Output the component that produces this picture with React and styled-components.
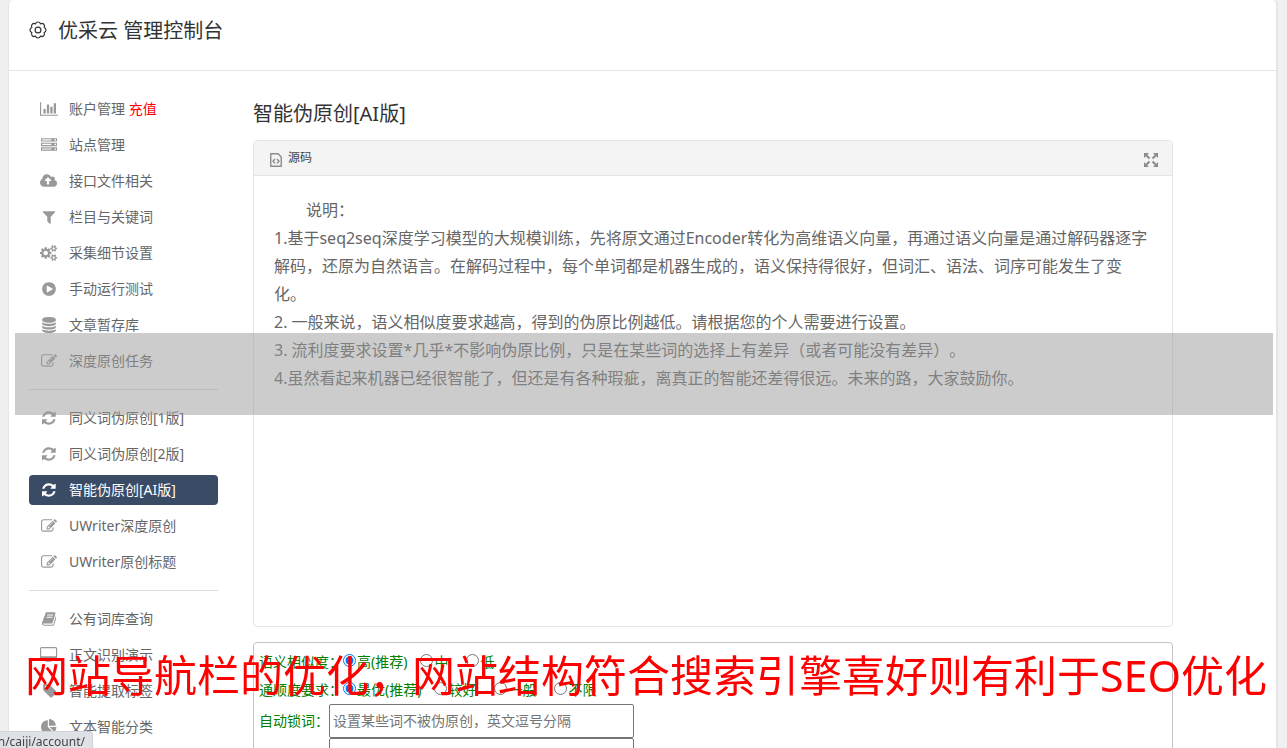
import React from "react";
import styled, { createGlobalStyle } from "styled-components";

const GlobalStyle = createGlobalStyle`
  *, *::before, *::after { box-sizing: border-box; }
  html, body { margin: 0; padding: 0; }
  body {
    background: #f0f0f0;
    color: #666;
    font-family: "Noto Sans", "Noto Sans CJK SC", sans-serif;
    font-size: 14px;
    line-height: 20px;
    text-spacing-trim: space-all;
  }
`;

const ICONS = {
  chart: ["0 0 2048 1792", "M640 896v512h-256v-512h256zm384-512v1024h-256v-1024h256zm1024 1152v128h-2048v-1536h128v1408h1920zm-640-896v768h-256v-768h256zm384-384v1152h-256v-1152h256z"],
  server: ["0 0 1792 1792", "M128 1408h1024v-128h-1024v128zm0-512h1024v-128h-1024v128zm1568 448q0-40-28-68t-68-28-68 28-28 68 28 68 68 28 68-28 28-68zm-1568-960h1024v-128h-1024v128zm1568 448q0-40-28-68t-68-28-68 28-28 68 28 68 68 28 68-28 28-68zm0-512q0-40-28-68t-68-28-68 28-28 68 28 68 68 28 68-28 28-68zm96 832v384h-1792v-384h1792zm0-512v384h-1792v-384h1792zm0-512v384h-1792v-384h1792z"],
  cloud: ["0 0 1920 1792", "M1280 864q0-14-9-23l-352-352q-9-9-23-9t-23 9l-351 351q-10 12-10 24 0 14 9 23t23 9h224v352q0 13 9.5 22.5t22.5 9.5h192q13 0 22.5-9.5t9.5-22.5v-352h224q13 0 22.5-9.5t9.5-22.5zm640 288q0 159-112.5 271.5t-271.5 112.5h-1088q-185 0-316.5-131.5t-131.5-316.5q0-130 70-240t188-165q-2-30-2-43 0-212 150-362t362-150q156 0 285.5 87t188.5 231q71-62 166-62 106 0 181 75t75 181q0 76-41 138 130 31 213.5 135.5t83.5 238.5z"],
  filter: ["0 0 1792 1792", "M1595 295q17 41-14 70l-493 493v742q0 42-39 59-13 5-25 5-27 0-45-19l-256-256q-19-19-19-45v-486l-493-493q-31-29-14-70 17-39 59-39h1280q42 0 59 39z"],
  cogs: ["0 0 1920 1792", "M896 896q0-106-75-181t-181-75-181 75-75 181 75 181 181 75 181-75 75-181zm768 512q0-52-38-90t-90-38-90 38-38 90q0 53 37.5 90.5t90.5 37.5 90.5-37.5 37.5-90.5zm0-1024q0-52-38-90t-90-38-90 38-38 90q0 53 37.5 90.5t90.5 37.5 90.5-37.5 37.5-90.5zm-384 421v185q0 10-7 19.5t-16 10.5l-155 24q-11 35-32 76 34 48 90 115 7 11 7 20 0 12-7 19-23 30-82.5 89.5t-78.5 59.5q-11 0-21-7l-115-90q-37 19-77 31-11 108-23 155-7 24-30 24h-186q-11 0-20-7.5t-10-17.5l-23-153q-34-10-75-31l-118 89q-7 7-20 7-11 0-21-8-144-133-144-160 0-9 7-19 10-14 41-53t47-61q-23-44-35-82l-152-24q-10-1-17-9.5t-7-19.5v-185q0-10 7-19.5t16-10.5l155-24q11-35 32-76-34-48-90-115-7-11-7-20 0-12 7-20 22-30 82-89t79-59q11 0 21 7l115 90q34-18 77-32 11-108 23-154 7-24 30-24h186q11 0 20 7.5t10 17.5l23 153q34 10 75 31l118-89q8-7 20-7 11 0 21 8 144 133 144 160 0 8-7 19-12 16-42 54t-45 60q23 48 34 82l152 23q10 2 17 10.5t7 19.5zm640 533v140q0 16-149 31-12 27-30 52 51 113 51 138 0 4-4 7-122 71-124 71-8 0-46-47t-52-68q-20 2-30 2t-30-2q-14 21-52 68t-46 47q-2 0-124-71-4-3-4-7 0-25 51-138-18-25-30-52-149-15-149-31v-140q0-16 149-31 13-29 30-52-51-113-51-138 0-4 4-7 4-2 35-20t59-34 30-16q8 0 46 46.5t52 67.5q20-2 30-2t30 2q51-71 92-112l6-2q4 0 124 70 4 3 4 7 0 25-51 138 17 23 30 52 149 15 149 31zm0-1024v140q0 16-149 31-12 27-30 52 51 113 51 138 0 4-4 7-122 71-124 71-8 0-46-47t-52-68q-20 2-30 2t-30-2q-14 21-52 68t-46 47q-2 0-124-71-4-3-4-7 0-25 51-138-18-25-30-52-149-15-149-31v-140q0-16 149-31 13-29 30-52-51-113-51-138 0-4 4-7 4-2 35-20t59-34 30-16q8 0 46 46.5t52 67.5q20-2 30-2t30 2q51-71 92-112l6-2q4 0 124 70 4 3 4 7 0 25-51 138 17 23 30 52 149 15 149 31z"],
  play: ["0 0 1792 1792", "M896 128q209 0 385.5 103t279.5 279.5 103 385.5-103 385.5-279.5 279.5-385.5 103-385.5-103-279.5-279.5-103-385.5 103-385.5 279.5-279.5 385.5-103zm384 823q32-18 32-55t-32-55l-544-320q-31-19-64-1-32 19-32 56v640q0 37 32 56 16 8 32 8 17 0 32-9z"],
  database: ["0 0 1792 1792", "M896 768q237 0 443-43t325-127v170q0 69-103 128t-280 93.5-385 34.5-385-34.5-280-93.5-103-128v-170q119 84 325 127t443 43zm0 768q237 0 443-43t325-127v170q0 69-103 128t-280 93.5-385 34.5-385-34.5-280-93.5-103-128v-170q119 84 325 127t443 43zm0-384q237 0 443-43t325-127v170q0 69-103 128t-280 93.5-385 34.5-385-34.5-280-93.5-103-128v-170q119 84 325 127t443 43zm0-1152q208 0 385 34.5t280 93.5 103 128v128q0 69-103 128t-280 93.5-385 34.5-385-34.5-280-93.5-103-128v-128q0-69 103-128t280-93.5 385-34.5z"],
  edit: ["0 0 1792 1792", "M888 1184l116-116-152-152-116 116v56h96v96h56zm440-720q-16-16-33 1l-350 350q-17 17-1 33t33-1l350-350q17-17 1-33zm80 594v190q0 119-84.5 203.5t-203.5 84.5h-832q-119 0-203.5-84.5t-84.5-203.5v-832q0-119 84.5-203.5t203.5-84.5h832q63 0 117 25 15 7 18 23 3 17-9 29l-49 49q-14 14-32 8-23-6-45-6h-832q-66 0-113 47t-47 113v832q0 66 47 113t113 47h832q66 0 113-47t47-113v-126q0-13 9-22l64-64q15-15 35-7t20 29zm-96-738l288 288-672 672h-288v-288zm444 132l-92 92-288-288 92-92q28-28 68-28t68 28l152 152q28 28 28 68t-28 68z"],
  refresh: ["0 0 1536 1792", "M1511 1056q0 5-1 7-64 268-268 434.5t-478 166.5q-146 0-282.5-55t-243.5-157l-129 129q-19 19-45 19t-45-19-19-45v-448q0-26 19-45t45-19h448q26 0 45 19t19 45-19 45l-137 137q71 66 161 102t187 36q134 0 250-65t186-179q11-17 53-117 8-23 30-23h192q13 0 22.5 9.5t9.5 22.5zm25-800v448q0 26-19 45t-45 19h-448q-26 0-45-19t-19-45 19-45l138-138q-148-137-349-137-134 0-250 65t-186 179q-11 17-53 117-8 23-30 23h-199q-13 0-22.5-9.5t-9.5-22.5v-7q65-268 270-434.5t480-166.5q146 0 284 55.5t245 156.5l130-129q19-19 45-19t45 19 19 45z"],
  book: ["0 0 1664 1792", "M1639 478q40 57 18 129l-275 906q-19 64-76.5 107.5t-122.5 43.5h-923q-77 0-148.5-53.5t-99.5-131.5q-24-67-2-127 0-4 3-27t4-37q1-8-3-21.5t-3-19.5q2-11 8-21t16.5-23.5 16.5-23.5q23-38 45-91.5t30-91.5q3-10 .5-30t-.5-28q3-11 17-28t17-23q21-36 42-92t25-90q1-9-2.5-32t.5-28q4-13 22-30.5t22-22.5q19-26 42.5-84.5t27.5-96.5q1-8-3-25.5t-2-26.5q2-8 9-18t18-23 17-21q8-12 16.5-30.5t15-35 16-36 19.5-32 26.5-23.5 36-11.5 47.5 5.5l-1 3q38-9 51-9h761q74 0 114 56t18 130l-274 906q-36 119-71.5 153.5t-128.5 34.5h-869q-27 0-38 15-11 16-1 43 24 70 144 70h923q29 0 56-15.5t35-41.5l300-987q7-22 5-57 38 15 59 43zm-1064 2q-4 13 2 22.5t20 9.5h608q13 0 25.5-9.5t16.5-22.5l21-64q4-13-2-22.5t-20-9.5h-608q-13 0-25.5 9.5t-16.5 22.5zm-83 256q-4 13 2 22.5t20 9.5h608q13 0 25.5-9.5t16.5-22.5l21-64q4-13-2-22.5t-20-9.5h-608q-13 0-25.5 9.5t-16.5 22.5z"],
  desktop: ["-64 0 1920 1792", "M1728 992v-832q0-13-9.5-22.5t-22.5-9.5h-1600q-13 0-22.5 9.5t-9.5 22.5v832q0 13 9.5 22.5t22.5 9.5h1600q13 0 22.5-9.5t9.5-22.5zm128-832v1088q0 66-47 113t-113 47h-544q0 37 16 77.5t32 71 16 43.5q0 26-19 45t-45 19h-512q-26 0-45-19t-19-45q0-14 16-44t32-70 16-78h-544q-66 0-113-47t-47-113v-1088q0-66 47-113t113-47h1600q66 0 113 47t47 113z"],
  tag: ["0 0 1664 1792", "M576 448q0-53-37.5-90.5t-90.5-37.5-90.5 37.5-37.5 90.5 37.5 90.5 90.5 37.5 90.5-37.5 37.5-90.5zm1067 576q0 53-37 90l-491 492q-39 37-91 37-53 0-90-37l-715-716q-38-37-64.5-101t-26.5-117v-416q0-52 38-90t90-38h416q53 0 117 26.5t102 64.5l715 714q37 39 37 91z"],
  pie: ["0 0 1792 1792", "M768 890l546 546q-106 108-247.5 168t-298.5 60q-209 0-385.5-103t-279.5-279.5-103-385.5 103-385.5 279.5-279.5 385.5-103v762zm187 6h773q0 157-60 298.5t-168 247.5zm709-128h-768v-768q209 0 385.5 103t279.5 279.5 103 385.5z"],
};

const NAV = [
  [
    { icon: "chart", text: "账户管理", note: "充值" },
    { icon: "server", text: "站点管理" },
    { icon: "cloud", text: "接口文件相关" },
    { icon: "filter", text: "栏目与关键词" },
    { icon: "cogs", text: "采集细节设置" },
    { icon: "play", text: "手动运行测试" },
    { icon: "database", text: "文章暂存库" },
    { icon: "edit", text: "深度原创任务" },
  ],
  [
    { icon: "refresh", text: "同义词伪原创[1版]" },
    { icon: "refresh", text: "同义词伪原创[2版]" },
    { icon: "refresh", text: "智能伪原创[AI版]", active: true },
    { icon: "edit", text: "UWriter深度原创" },
    { icon: "edit", text: "UWriter原创标题" },
  ],
  [
    { icon: "book", text: "公有词库查询" },
    { icon: "desktop", text: "正文识别演示" },
    { icon: "tag", text: "智能提取标签" },
    { icon: "pie", text: "文本智能分类" },
  ],
];

const Shell = styled.div`
  display: flex;
  flex-direction: column;
  height: 100vh;
  margin: 0 9px 0 8px;
  overflow: hidden;
  background: #fff;
  border: solid #e5e5e5;
  border-width: 0 2px 0 1px;
  border-radius: 5px 5px 0 0;
`;

const Header = styled.header`
  display: flex;
  align-items: center;
  gap: 11px;
  flex: none;
  height: 71px;
  padding: 0 20px 11px;
  border-bottom: 1px solid #e5e5e5;
  color: #333;
`;

const PageTitle = styled.h1`
  margin: 0;
  padding-top: 3px;
  font-size: 20px;
  line-height: 28px;
  font-weight: 400;
`;

const Columns = styled.div`
  display: flex;
  align-items: flex-start;
  gap: 35px;
  padding: 23px 20px 0;
`;

const Sidebar = styled.nav`
  flex: none;
  width: 189px;
`;

const NavGroup = styled.ul`
  display: flex;
  flex-direction: column;
  gap: 6px;
  margin: 0;
  padding: 0;
  list-style: none;

  & + & {
    margin-top: 13px;
    padding-top: 13px;
    border-top: 1px solid #ddd;
  }
`;

const NavLink = styled.a`
  display: flex;
  align-items: center;
  gap: 10px;
  height: 30px;
  padding: 0 10px;
  border-radius: 4px;
  background: ${(p) => (p.$active ? "#3a4b66" : "transparent")};
  color: ${(p) => (p.$active ? "#fff" : "#666")};
  text-decoration: none;
  white-space: nowrap;
`;

const IconSlot = styled.span`
  display: flex;
  justify-content: center;
  width: 20px;
  color: ${(p) => (p.$active ? "#fff" : "#999")};

  svg {
    flex: none;
    height: 16px;
    fill: currentColor;
  }
`;

const Note = styled.span`
  color: #f00;
`;

const Main = styled.main`
  flex: 1;
  min-width: 0;
  max-width: 920px;
`;

const SectionTitle = styled.h2`
  margin: 6px 0 12px;
  color: #333;
  font-size: 20px;
  line-height: 28px;
  font-weight: 400;
`;

const Editor = styled.section`
  border: 1px solid #e5e5e5;
  border-radius: 4px;
`;

const EditorBar = styled.div`
  display: flex;
  align-items: center;
  justify-content: space-between;
  height: 35px;
  padding: 0 14px 0 16px;
  background: #f4f4f4;
  border-bottom: 1px solid #e5e5e5;
  border-radius: 3px 3px 0 0;
`;

const BarButton = styled.button`
  display: flex;
  align-items: center;
  gap: 6px;
  padding: 0;
  border: 0;
  background: none;
  color: #444;
  font: inherit;
  font-size: 12px;

  svg {
    margin-top: 3px;
  }
`;

const EditorBody = styled.div`
  min-height: 450px;
  padding: 20px;
  font-size: 16px;
  line-height: 28px;
`;

const Paragraph = styled.p`
  margin: 0;
  text-indent: ${(p) => (p.$indent ? "32px" : "0")};
`;

const Options = styled.form`
  margin-top: 15px;
  padding: 5px;
  border: 1px solid #c4c4c4;
  border-radius: 4px;
  color: #008000;
`;

const RadioRow = styled.fieldset`
  display: flex;
  align-items: center;
  height: 28px;
  margin: 0;
  padding: 0;
  border: 0;
`;

const RowName = styled.span`
  flex: none;
  width: 84px;
`;

const Choice = styled.label`
  display: flex;
  align-items: center;
  margin-right: ${(p) => (p.$first ? "13px" : "18px")};

  input {
    width: 13px;
    height: 13px;
    margin: 0 1px 3px 0;
  }
`;

const FieldRow = styled.label`
  display: flex;
  align-items: center;
`;

const FieldName = styled.span`
  flex: none;
  width: 70px;
`;

const TextField = styled.input`
  width: 305px;
  height: 34px;
  padding: 0 3px 2px;
  border: 1px solid #767676;
  border-radius: 2px;
  color: #333;
  font: inherit;

  &::placeholder {
    color: #757575;
    opacity: 1;
  }
`;

const Band = styled.div`
  position: fixed;
  top: 333px;
  left: 15px;
  right: 14px;
  height: 82px;
  background: rgba(153, 153, 153, 0.5);
  pointer-events: none;
`;

const Caption = styled.div`
  position: fixed;
  bottom: 42px;
  left: 25px;
  color: #f00;
  font-size: 43px;
  line-height: 60px;
  white-space: nowrap;
  pointer-events: none;
`;

const StatusBubble = styled.div`
  position: fixed;
  bottom: 0;
  left: 0;
  display: flex;
  justify-content: flex-end;
  width: 93px;
  height: 17px;
  padding-right: 7px;
  overflow: hidden;
  background: #dee1e6;
  border-top: 1px solid #d0d3d8;
  border-right: 1px solid #d0d3d8;
  border-top-right-radius: 4px;
  color: #444;
  font-size: 12px;
  line-height: 20px;
`;

function GearIcon() {
  return (
    <svg width="18" height="18" viewBox="0 0 18 18" fill="none" stroke="currentColor" strokeWidth="1.2" strokeLinejoin="round" aria-hidden="true">
      <path d="M15.1 6.5A2.6 2.6 0 0 1 15.1 11.5A2.6 2.6 0 0 1 11.5 15.1A2.6 2.6 0 0 1 6.5 15.1A2.6 2.6 0 0 1 2.9 11.5A2.6 2.6 0 0 1 2.9 6.5A2.6 2.6 0 0 1 6.5 2.9A2.6 2.6 0 0 1 11.5 2.9A2.6 2.6 0 0 1 15.1 6.5Z" />
      <circle cx="9" cy="9" r="2.9" />
    </svg>
  );
}

function NavIcon({ name, active }) {
  const [viewBox, path] = ICONS[name];
  return (
    <IconSlot $active={active}>
      <svg viewBox={viewBox} aria-hidden="true">
        <path d={path} />
      </svg>
    </IconSlot>
  );
}

function SourceIcon() {
  return (
    <svg width="12" height="14" viewBox="0 0 12 14" fill="none" stroke="#8c8c8c" aria-hidden="true">
      <path d="M.75 .75H8L11.25 4V13.25H.75Z" strokeWidth="1.4" />
      <path d="M5 6 3 8.2 5 10.4M7 6l2 2.2-2 2.2" strokeWidth="1.4" />
    </svg>
  );
}

function ExpandIcon() {
  return (
    <svg width="14" height="14" viewBox="0 0 14 14" fill="#8c8c8c" stroke="#8c8c8c" aria-hidden="true">
      <path stroke="none" d="M0 0H5L0 5ZM14 0V5L9 0ZM0 14V9L5 14ZM14 14H9L14 9Z" />
      <path strokeWidth="2" d="M2 2 5.5 5.5M12 2 8.5 5.5M2 12 5.5 8.5M12 12 8.5 8.5" />
    </svg>
  );
}

function RadioGroup({ title, name, options }) {
  return (
    <RadioRow aria-label={title}>
      <RowName>{title}：</RowName>
      {options.map((text, i) => (
        <Choice key={text} $first={i === 0}>
          <input type="radio" name={name} defaultChecked={i === 0} />
          {text}
        </Choice>
      ))}
    </RadioRow>
  );
}

export default function App() {
  return (
    <>
      <GlobalStyle />
      <Shell>
        <Header>
          <GearIcon />
          <PageTitle>优采云 管理控制台</PageTitle>
        </Header>
        <Columns>
          <Sidebar>
            {NAV.map((group, i) => (
              <NavGroup key={i}>
                {group.map((item) => (
                  <li key={item.text}>
                    <NavLink href="#" $active={item.active}>
                      <NavIcon name={item.icon} active={item.active} />
                      <span>
                        {item.text}
                        {item.note && <Note> {item.note}</Note>}
                      </span>
                    </NavLink>
                  </li>
                ))}
              </NavGroup>
            ))}
          </Sidebar>
          <Main>
            <SectionTitle>智能伪原创[AI版]</SectionTitle>
            <Editor>
              <EditorBar>
                <BarButton type="button">
                  <SourceIcon />
                  源码
                </BarButton>
                <BarButton type="button" aria-label="全屏">
                  <ExpandIcon />
                </BarButton>
              </EditorBar>
              <EditorBody>
                <Paragraph $indent>说明：</Paragraph>
                <Paragraph>
                  1.基于seq2seq深度学习模型的大规模训练，先将原文通过Encoder转化为高维语义向量，再通过语义向量是通过解码器逐字解码，还原为自然语言。在解码过程中，每个单词都是机器生成的，语义保持得很好，但词汇、语法、词序可能发生了变化。
                </Paragraph>
                <Paragraph>2. 一般来说，语义相似度要求越高，得到的伪原比例越低。请根据您的个人需要进行设置。</Paragraph>
                <Paragraph>3. 流利度要求设置*几乎*不影响伪原比例，只是在某些词的选择上有差异（或者可能没有差异）。</Paragraph>
                <Paragraph>4.虽然看起来机器已经很智能了，但还是有各种瑕疵，离真正的智能还差得很远。未来的路，大家鼓励你。</Paragraph>
              </EditorBody>
            </Editor>
            <Options>
              <RadioGroup title="语义相似度" name="similarity" options={["高(推荐)", "中", "低"]} />
              <RadioGroup title="通顺度要求" name="fluency" options={["最优(推荐)", "较好", "一般", "不限"]} />
              <FieldRow>
                <FieldName>自动锁词：</FieldName>
                <TextField type="text" placeholder="设置某些词不被伪原创，英文逗号分隔" />
              </FieldRow>
              <FieldRow>
                <FieldName />
                <TextField type="text" />
              </FieldRow>
            </Options>
          </Main>
        </Columns>
      </Shell>
      <Band />
      <Caption>网站导航栏的优化，网站结构符合搜索引擎喜好则有利于SEO优化</Caption>
      <StatusBubble>n/caiji/account/</StatusBubble>
    </>
  );
}
